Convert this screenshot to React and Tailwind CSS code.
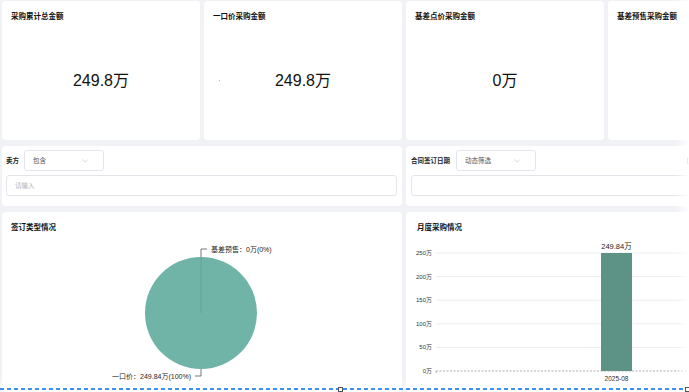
import React from "react";

const font = "font-['Liberation_Sans','Noto_Sans_CJK_SC',sans-serif]";

function StatCard({ title, value, dot }) {
  return (
    <div className="relative flex flex-col h-[139px] bg-white rounded-[4px]">
      <div className="pl-[9px] pt-[12px] text-[7.5px] leading-[8px] font-bold text-[#111]">{title}</div>
      <div className="flex-1 flex items-center justify-center text-[16px] text-[#111]">{value}</div>
      {dot && <span className="absolute left-[15px] top-[79px] w-[1px] h-[1px] bg-[#bbb]" />}
    </div>
  );
}

function Chevron() {
  return (
    <svg width="6" height="4" viewBox="0 0 6 4" className="shrink-0">
      <path d="M0.5 0.8 L3 3.2 L5.5 0.8" fill="none" stroke="#c4c7cd" strokeWidth="0.7" />
    </svg>
  );
}

function Select({ text }) {
  return (
    <div className="flex items-center justify-between w-[80px] h-[21px] pl-[8px] pr-[15px] border border-[#e3e5ea] rounded-[3px] text-[6.5px] text-[#555]">
      <span>{text}</span>
      <Chevron />
    </div>
  );
}

function PieChart() {
  return (
    <svg width="400" height="150" className="block">
      <circle cx="199" cy="73" r="56" fill="#6fb4a6" />
      <line x1="199" y1="17" x2="199" y2="73" stroke="#5a9a8d" strokeWidth="0.6" />
      <polyline points="199,17 199,9 205,9" fill="none" stroke="#555" strokeWidth="0.8" />
      <text x="209" y="9" fontSize="7" dominantBaseline="central" fill="#222">基差预售：0万(0%)</text>
      <polyline points="199,129 199,136 193,136" fill="none" stroke="#555" strokeWidth="0.8" />
      <text x="189" y="136" fontSize="7" dominantBaseline="central" textAnchor="end" fill="#222">一口价：249.84万(100%)</text>
    </svg>
  );
}

function BarChart() {
  const ticks = ["250万", "200万", "150万", "100万", "50万", "0万"];
  return (
    <svg width="400" height="150" className="block">
      {ticks.map((t, i) => {
        const y = 13 + i * 23.6;
        return (
          <g key={t}>
            {i < 5 && <line x1="30" y1={y} x2="400" y2={y} stroke="#e6e8ee" strokeWidth="0.8" />}
            <text x="26" y={y} fontSize="6" textAnchor="end" dominantBaseline="central" fill="#333">{t}</text>
          </g>
        );
      })}
      <rect x="195" y="13" width="31" height="118" fill="#5d9387" />
      <line x1="30" y1="131" x2="400" y2="131" stroke="#8a8a8a" strokeWidth="0.7" strokeDasharray="2 1.5" />
      <line x1="30" y1="131" x2="30" y2="133" stroke="#8a8a8a" strokeWidth="0.7" />
      <text x="210.5" y="6" fontSize="7.5" textAnchor="middle" dominantBaseline="central" fill="#222">249.84万</text>
      <text x="210.5" y="138" fontSize="6.5" textAnchor="middle" dominantBaseline="central" fill="#222">2025-08</text>
    </svg>
  );
}

export default function App() {
  return (
    <div className={`relative w-[689px] h-[392px] overflow-hidden bg-[#f1f2f6] ${font}`}>
      <div className="w-[810px] pl-[2px] pt-[1px] grid grid-cols-[repeat(4,198px)] gap-x-[4px] gap-y-[6px]">
        <StatCard title="采购累计总金额" value="249.8万" />
        <StatCard title="一口价采购金额" value="249.8万" dot />
        <StatCard title="基差点价采购金额" value="0万" />
        <StatCard title="基差预售采购金额" value="" />

        {/* filters */}
        <div className="col-span-2 h-[60px] bg-white rounded-[4px] px-[4px] pt-[4px] flex flex-col gap-[4px]">
          <div className="flex items-center gap-[5px]">
            <span className="text-[6.5px] font-bold text-[#222]">卖方</span>
            <Select text="包含" />
          </div>
          <div className="h-[21px] w-[391px] border border-[#e3e5ea] rounded-[3px] pl-[8px] flex items-center text-[6.5px] text-[#b0b4bc]">
            请输入
          </div>
        </div>
        <div className="col-span-2 h-[60px] bg-white rounded-[4px] px-[5px] pt-[4px] flex flex-col gap-[4px]">
          <div className="flex items-center gap-[6px]">
            <span className="text-[6.5px] font-bold text-[#222]">合同签订日期</span>
            <Select text="动态筛选" />
            <span className="ml-[145px] w-[5px] h-[6px] border border-[#333]" />
          </div>
          <div className="h-[21px] w-full border border-[#e3e5ea] rounded-[3px]" />
        </div>

        {/* charts */}
        <div className="col-span-2 h-[180px] bg-white rounded-[4px]">
          <div className="h-[28px] pl-[9px] pt-[12px] text-[7.5px] leading-[8px] font-bold text-[#111]">签订类型情况</div>
          <PieChart />
        </div>
        <div className="col-span-2 h-[180px] bg-white rounded-[4px]">
          <div className="h-[28px] pl-[11px] pt-[12px] text-[7.5px] leading-[8px] font-bold text-[#111]">月度采购情况</div>
          <BarChart />
        </div>
      </div>

      {/* scroll fades and selection frame */}
      <div className="absolute top-0 right-0 h-full w-[14px] bg-linear-to-r from-white/0 to-white" />
      <div className="absolute left-0 bottom-[3px] w-full h-[12px] bg-linear-to-b from-white/0 to-white/50" />
      <div className="absolute left-0 bottom-[2px] w-full h-[2px] bg-[repeating-linear-gradient(90deg,#3b8ef3_0px,#3b8ef3_4px,transparent_4px,transparent_7px)]" />
      <div className="absolute left-[338px] bottom-0 w-[5px] h-[5px] border border-[#555] bg-white" />
      <div className="absolute left-[685px] bottom-0 w-[5px] h-[5px] border border-[#555] bg-white" />
    </div>
  );
}
